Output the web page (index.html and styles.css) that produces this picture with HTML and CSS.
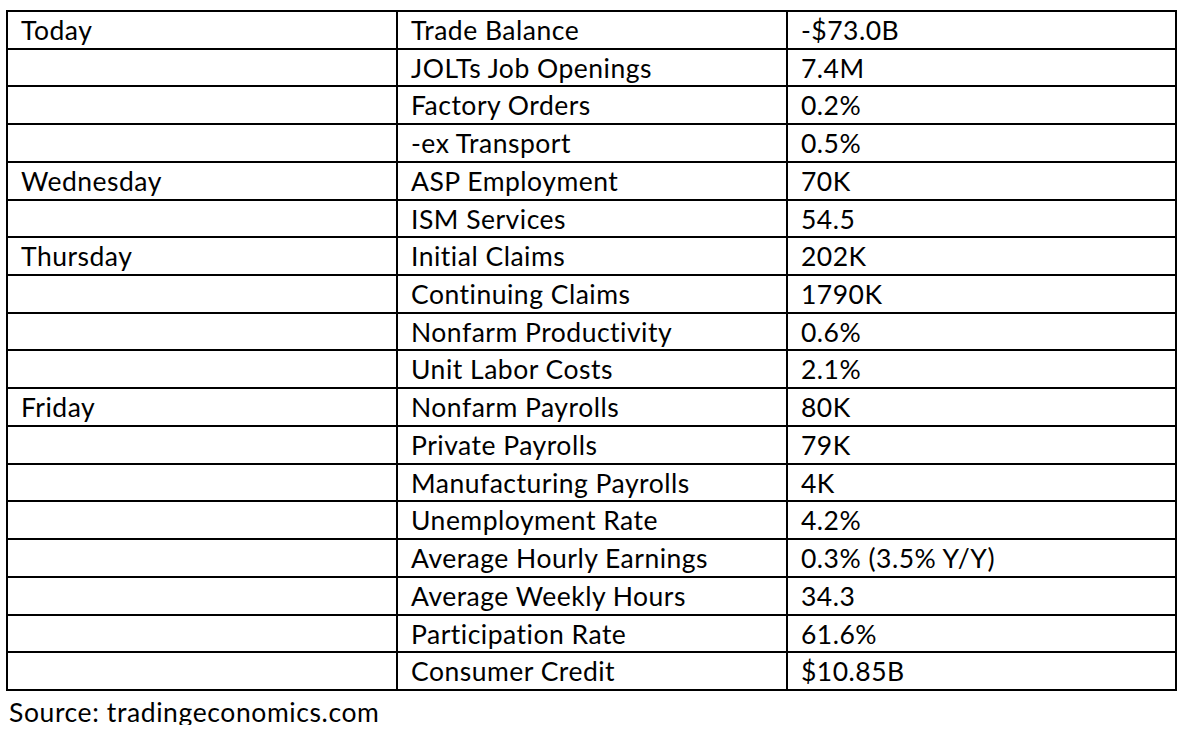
FILE: index.html
```html
<!DOCTYPE html>
<html>
<head>
<meta charset="utf-8">
<link rel="stylesheet" href="styles.css">
</head>
<body>
<table class="cal">
  <colgroup><col class="c1"><col class="c2"><col class="c3"></colgroup>
  <tbody>
    <tr><td>Today</td><td>Trade Balance</td><td>-$73.0B</td></tr>
    <tr><td></td><td>JOLTs Job Openings</td><td>7.4M</td></tr>
    <tr><td></td><td>Factory Orders</td><td>0.2%</td></tr>
    <tr><td></td><td>-ex Transport</td><td>0.5%</td></tr>
    <tr><td>Wednesday</td><td>ASP Employment</td><td>70K</td></tr>
    <tr><td></td><td>ISM Services</td><td>54.5</td></tr>
    <tr><td>Thursday</td><td>Initial Claims</td><td>202K</td></tr>
    <tr><td></td><td>Continuing Claims</td><td>1790K</td></tr>
    <tr><td></td><td>Nonfarm Productivity</td><td>0.6%</td></tr>
    <tr><td></td><td>Unit Labor Costs</td><td>2.1%</td></tr>
    <tr><td>Friday</td><td>Nonfarm Payrolls</td><td>80K</td></tr>
    <tr><td></td><td>Private Payrolls</td><td>79K</td></tr>
    <tr><td></td><td>Manufacturing Payrolls</td><td>4K</td></tr>
    <tr><td></td><td>Unemployment Rate</td><td>4.2%</td></tr>
    <tr><td></td><td>Average Hourly Earnings</td><td>0.3% (3.5% Y/Y)</td></tr>
    <tr><td></td><td>Average Weekly Hours</td><td>34.3</td></tr>
    <tr><td></td><td>Participation Rate</td><td>61.6%</td></tr>
    <tr><td></td><td>Consumer Credit</td><td>$10.85B</td></tr>
  </tbody>
</table>
<div class="source">Source: tradingeconomics.com</div>
</body>
</html>
```
FILE: styles.css
```css
html, body {
  margin: 0;
  padding: 0;
  background: #fff;
}
body {
  font-family: Lato, "Open Sans", sans-serif;
  font-size: 26.5px;
  letter-spacing: 0.5px;
  color: #000;
}
.cal {
  border-collapse: separate;
  border-spacing: 0;
  border-top: 2px solid #000;
  border-left: 2px solid #000;
  margin: 10px 0 0 6px;
  width: 1171px;
  table-layout: fixed;
}
.c1 { width: 390px; }
.c2 { width: 390px; }
.c3 { width: 389px; }
.cal tr {
  height: 37.72px;
}
.cal td {
  border-right: 2px solid #000;
  border-bottom: 2px solid #000;
  padding: 5px 0 0 13px;
  vertical-align: top;
  line-height: 26.5px;
  white-space: nowrap;
  box-sizing: border-box;
  overflow: hidden;
}
.source {
  margin: 8px 0 0 9px;
  line-height: 26.5px;
  letter-spacing: 0.6px;
}
```
